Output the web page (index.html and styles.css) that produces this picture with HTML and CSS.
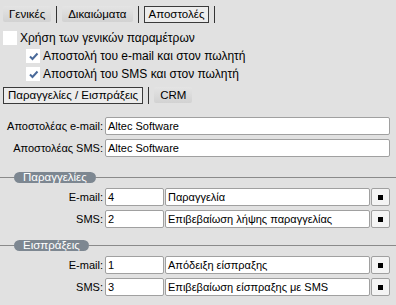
FILE: index.html
```html
<!DOCTYPE html>
<html>
<head>
<meta charset="utf-8">
<link rel="stylesheet" href="styles.css">
</head>
<body>
<div class="page">
  <div class="tabs">
    <span class="tab plain">Γενικές</span>
    <span class="sep"></span>
    <span class="tab plain">Δικαιώματα</span>
    <span class="sep"></span>
    <span class="tab active">Αποστολές</span>
    <span class="sep"></span>
  </div>
  <div class="checks">
    <label class="chk"><span class="box"></span>Χρήση των γενικών παραμέτρων</label>
    <label class="chk sub"><span class="box"><svg width="11" height="11" viewBox="0 0 11 11"><path d="M2 5.5 L4.5 8 L9.5 2.5" fill="none" stroke="#4a6a9a" stroke-width="2"/></svg></span>Αποστολή του e-mail και στον πωλητή</label>
    <label class="chk sub"><span class="box"><svg width="11" height="11" viewBox="0 0 11 11"><path d="M2 5.5 L4.5 8 L9.5 2.5" fill="none" stroke="#4a6a9a" stroke-width="2"/></svg></span>Αποστολή του SMS και στον πωλητή</label>
  </div>
  <div class="tabs tabs2">
    <span class="tab active">Παραγγελίες / Εισπράξεις</span>
    <span class="sep"></span>
    <span class="tab plain crm">CRM</span>
  </div>
  <div class="senders">
    <div class="frow"><span class="lbl">Αποστολέας e-mail:</span><span class="inp grow">Altec Software</span></div>
    <div class="frow"><span class="lbl">Αποστολέας SMS:</span><span class="inp grow">Altec Software</span></div>
  </div>
  <div class="group g1">
    <div class="ghead"><span class="gline short"></span><span class="pill">Παραγγελίες</span><span class="gline long"></span></div>
    <div class="frow"><span class="lbl">E-mail:</span><span class="inp num">4</span><span class="inp grow">Παραγγελία</span><span class="btn"><i></i></span></div>
    <div class="frow"><span class="lbl">SMS:</span><span class="inp num">2</span><span class="inp grow">Επιβεβαίωση λήψης παραγγελίας</span><span class="btn"><i></i></span></div>
  </div>
  <div class="group g2">
    <div class="ghead"><span class="gline short"></span><span class="pill">Εισπράξεις</span><span class="gline long"></span></div>
    <div class="frow"><span class="lbl">E-mail:</span><span class="inp num">1</span><span class="inp grow">Απόδειξη είσπραξης</span><span class="btn"><i></i></span></div>
    <div class="frow"><span class="lbl">SMS:</span><span class="inp num">3</span><span class="inp grow">Επιβεβαίωση είσπραξης με SMS</span><span class="btn"><i></i></span></div>
  </div>
</div>
</body>
</html>
```
FILE: styles.css
```css
html, body {
  margin: 0;
  padding: 0;
  background: #e1e1e1;
}
body {
  font-family: "Liberation Sans", Arial, sans-serif;
  font-size: 11.5px;
  color: #000;
}
.page {
  width: 396px;
  height: 305px;
  overflow: hidden;
  display: flex;
  flex-direction: column;
}
.tabs {
  display: flex;
  align-items: center;
  height: 18px;
  margin-top: 5px;
  padding-left: 3px;
  gap: 4px;
}
.tab {
  height: 16px;
  line-height: 16px;
  padding: 0 4px;
  box-sizing: border-box;
  white-space: nowrap;
}
.tab.plain {
  background: linear-gradient(#e4e4e4, #d2d2d2);
  border-radius: 2px;
  padding: 0 6px;
}
.tab.active {
  border: 1px solid #3a3a3a;
  height: 17px;
  line-height: 15px;
  background: #ececec;
}
.sep {
  width: 1px;
  height: 17px;
  background: #333;
  margin: 0 1px;
}
.checks {
  display: flex;
  flex-direction: column;
  margin-top: 8px;
  padding-left: 3px;
  gap: 4px;
  font-size: 12px;
}
.chk {
  display: flex;
  align-items: center;
  height: 14px;
  gap: 3px;
  white-space: nowrap;
}
.chk.sub {
  padding-left: 23px;
}
.box {
  width: 14px;
  height: 14px;
  background: #fff;
  display: flex;
  align-items: center;
  justify-content: center;
}
.tabs2 {
  margin-top: 5px;
}
.crm {
  padding: 0 7px;
}
.senders {
  margin-top: 13px;
  display: flex;
  flex-direction: column;
  gap: 4px;
}
.frow {
  display: flex;
  align-items: center;
  height: 18px;
  padding-right: 6px;
  font-size: 11px;
}
.lbl {
  width: 105px;
  text-align: right;
  padding-right: 2px;
  box-sizing: border-box;
  flex: none;
  white-space: nowrap;
}
.inp {
  height: 18px;
  line-height: 16px;
  box-sizing: border-box;
  background: #fff;
  border: 1px solid #a0a0a0;
  border-radius: 2px;
  padding-left: 2px;
  white-space: nowrap;
  overflow: hidden;
}
.grow {
  flex: 1;
}
.num {
  width: 59px;
  flex: none;
  margin-right: 1px;
}
.btn {
  width: 19px;
  height: 18px;
  box-sizing: border-box;
  border: 1px solid #a0a0a0;
  border-radius: 2px;
  background: #f4f4f4;
  margin-left: 1px;
  display: flex;
  align-items: center;
  justify-content: center;
  flex: none;
}
.btn i {
  width: 5px;
  height: 5px;
  background: #000;
}
.group {
  display: flex;
  flex-direction: column;
  gap: 4px;
}
.g1 {
  margin-top: 15px;
}
.g2 {
  margin-top: 12px;
}
.ghead {
  display: flex;
  align-items: center;
  height: 11px;
  margin-bottom: 1px;
}
.gline {
  height: 1px;
  background: #8a8a8a;
}
.gline.short {
  width: 14px;
}
.gline.long {
  flex: 1;
}
.pill {
  background: #7d8791;
  color: #fff;
  border-radius: 6px;
  height: 11px;
  line-height: 11px;
  padding: 0 9px;
}
```
